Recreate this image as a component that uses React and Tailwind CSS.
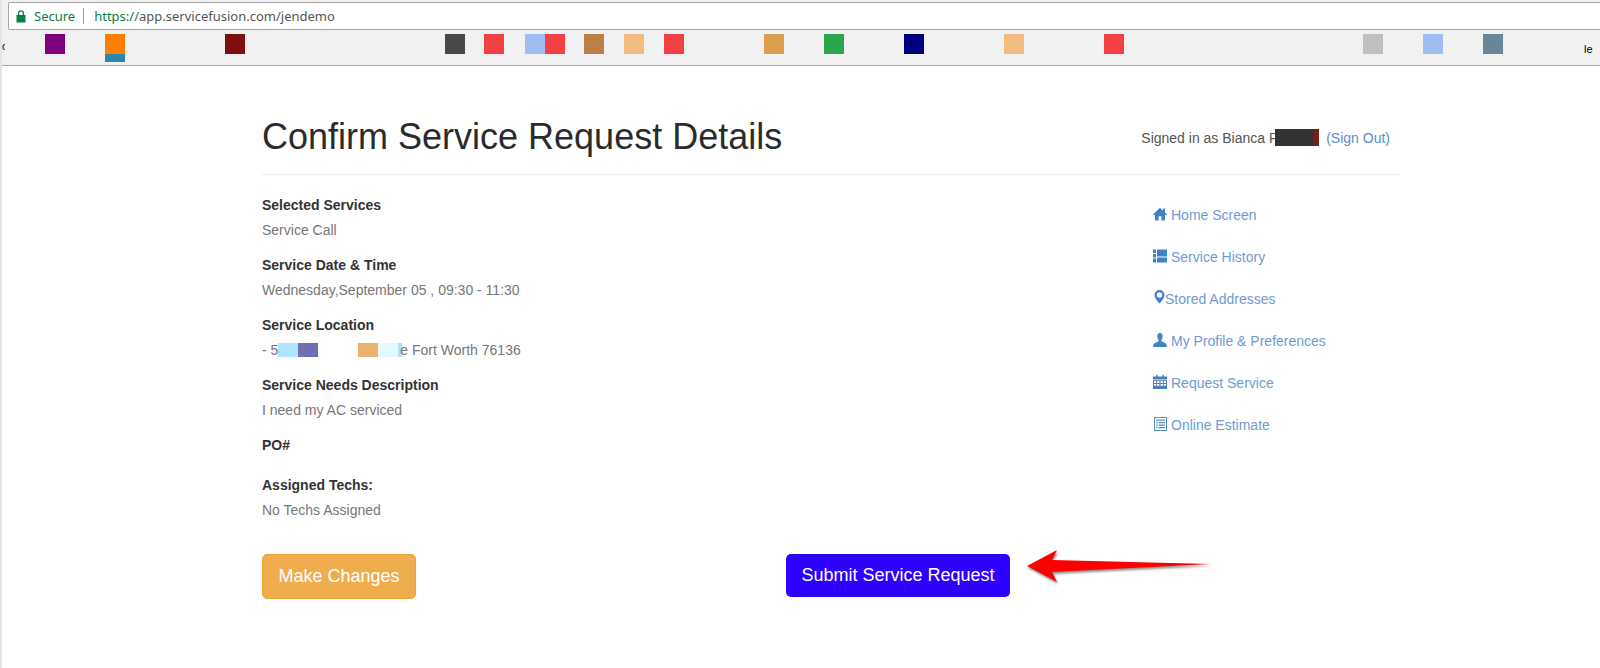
import React from "react";

const font = "font-['Liberation_Sans',Arial,sans-serif]";

function HomeIcon() {
  return (
    <svg viewBox="0 0 14 14" className="h-[14px] w-[14px] fill-[#3f82c6]">
      <path d="M7 .8 0 7.400l.9 1L2 7.400V13.500h3.600V9.200h2.800v4.300H12V7.400l1.100 1 .9-1-2-1.900V1.500h-2v2.200z" />
    </svg>
  );
}

function HistoryIcon() {
  return (
    <svg viewBox="0 0 14 14" className="h-[14px] w-[14px] fill-[#3f82c6]">
      <path d="M0 .5h3v3.600H0zM0 5.100h3v3.400H0zM0 9.500h3v4H0zM4 .5h10v7H4zM4 8.500h10v5H4z" />
    </svg>
  );
}

function PinIcon() {
  return (
    <svg viewBox="0 0 12 16" className="h-[16px] w-[12px] fill-[#3f82c6]">
      <path
        fillRule="evenodd"
        d="M6.500 0A5 5 0 0 0 1.500 5C1.500 8.500 6.500 13.500 6.500 13.500S11.500 8.500 11.500 5A5 5 0 0 0 6.500 0zm0 2.300a2.700 2.700 0 1 1 0 5.400 2.700 2.700 0 0 1 0-5.400z"
      />
    </svg>
  );
}

function UserIcon() {
  return (
    <svg viewBox="0 0 14 14" className="h-[14px] w-[14px] fill-[#3f82c6]">
      <path d="M7 0C5.200 0 4.300 1.300 4.300 3.200c0 1.500.6 3 1.400 3.800v1.300C4 9.200.6 10 .2 12.200V14h13.600v-1.800C13.400 10 10 9.200 8.300 8.300V7c.8-.8 1.400-2.300 1.400-3.800C9.700 1.300 8.800 0 7 0z" />
    </svg>
  );
}

function CalendarIcon() {
  return (
    <svg viewBox="0 0 14 14" className="h-[14px] w-[14px] fill-[#4a7fb8]">
      <path d="M3 0h1.500v1.500H9.500V0H11v1.500h3V4.500H0V1.500h3z" />
      <path
        fillRule="evenodd"
        d="M0 5.300h14V14H0zM1 6.300v1.800h2.200V6.300zm3 0v1.800h2.500V6.300zm3.500 0v1.800H10V6.300zm3.300 0v1.800H13V6.300zM1 9v1.800h2.200V9zm3 0v1.800h2.500V9zm3.500 0v1.800H10V9zm3.300 0v1.800H13V9z"
      />
    </svg>
  );
}

function EstimateIcon() {
  return (
    <svg viewBox="0 0 14 14" className="h-[14px] w-[14px] fill-[#5b8ec7]">
      <path
        fillRule="evenodd"
        d="M1 0h13v14H1zM2 1v12h11V1zM3 2.500h9v1.200H3zM3 5h1.500v1.200H3zm2.500 0H12v1.200H5.500zM3 7.500h1.500v1.200H3zm2.500 0H12v1.200H5.500zM3 10h1.500v1.200H3zm2.500 0H12v1.200H5.500z"
      />
    </svg>
  );
}

const details = [
  { label: "Selected Services", value: "Service Call" },
  { label: "Service Date & Time", value: "Wednesday,September 05 , 09:30 - 11:30" },
  { label: "Service Location", location: true },
  { label: "Service Needs Description", value: "I need my AC serviced" },
  { label: "PO#", value: "" },
  { label: "Assigned Techs:", value: "No Techs Assigned" },
];

const links = [
  { icon: <HomeIcon />, text: "Home Screen", gap: "gap-1" },
  { icon: <HistoryIcon />, text: "Service History", gap: "gap-1" },
  { icon: <PinIcon />, text: "Stored Addresses", gap: "gap-0" },
  { icon: <UserIcon />, text: "My Profile & Preferences", gap: "gap-1" },
  { icon: <CalendarIcon />, text: "Request Service", gap: "gap-1" },
  { icon: <EstimateIcon />, text: "Online Estimate", gap: "gap-1" },
];

function Swatch({ className }) {
  return <div className={`h-5 w-5 shrink-0 ${className}`} />;
}

function BrowserChrome() {
  return (
    <div>
      <div className="pt-[2px] pl-[6px] bg-[#f1f1f1]">
        <div className="flex h-[28px] items-center border border-r-0 border-[#a9a9a9] rounded-l-[2px] bg-white pl-[7px] text-[13px] leading-none font-['Noto_Sans',Arial,sans-serif]">
          <svg viewBox="0 0 10 13" className="h-[13px] w-[10px] fill-[#0b8043]">
            <path
              fillRule="evenodd"
              d="M2 5V3.200a3 3 0 0 1 6 0V5h1.500v7.500H.5V5zm1.300 0h3.400V3.200a1.700 1.700 0 0 0-3.400 0z"
            />
          </svg>
          <span className="ml-[8px] text-[#0b8043]">Secure</span>
          <div className="ml-[8px] h-[16px] w-px bg-[#9a9a9a]" />
          <span className="ml-[10px] text-[#0b8043]">
            https://<span className="text-[#555]">app.servicefusion.com/jendemo</span>
          </span>
        </div>
      </div>
      <div className="flex h-[36px] items-start border-b-[1px] border-[#aaaaaa] bg-[#f1f1f1] pt-[4px] text-[11px] font-['Liberation_Sans',Arial,sans-serif] text-black">
        <span className="mt-[7px] w-[3px] overflow-hidden leading-none">c</span>
        <Swatch className="ml-[40px] bg-[#800080]" />
        <div className="ml-[40px] h-[28px] w-5 shrink-0 bg-[#2d87ab]">
          <div className="h-5 bg-[#ff8000]" />
        </div>
        <Swatch className="ml-[100px] bg-[#801010]" />
        <Swatch className="ml-[200px] bg-[#484848]" />
        <Swatch className="ml-[19px] bg-[#f24044]" />
        <Swatch className="ml-[21px] bg-[#9fbdf0]" />
        <Swatch className="bg-[#f24044]" />
        <Swatch className="ml-[19px] bg-[#ba8048]" />
        <Swatch className="ml-[20px] bg-[#f4bd80]" />
        <Swatch className="ml-[20px] bg-[#f24044]" />
        <Swatch className="ml-[80px] bg-[#dc9f50]" />
        <Swatch className="ml-[40px] bg-[#2ca64c]" />
        <Swatch className="ml-[60px] bg-[#000080]" />
        <Swatch className="ml-[80px] bg-[#f4bd80]" />
        <Swatch className="ml-[80px] bg-[#f24044]" />
        <Swatch className="ml-[239px] bg-[#c0c0c0]" />
        <Swatch className="ml-[40px] bg-[#9fbdf0]" />
        <Swatch className="ml-[40px] bg-[#688698]" />
        <span className="ml-[81px] mt-[10px] leading-none">le</span>
      </div>
    </div>
  );
}

export default function App() {
  return (
    <div className={`min-h-[668px] bg-white border-l-2 border-[#e4e4e4] overflow-hidden ${font}`}>
      <BrowserChrome />
      <div className="ml-[260px] w-[1138px]">
        <div className="flex h-[109px] items-end justify-between border-b border-[#eeeeee] pb-[17px]">
          <h1 className="text-[36px] leading-[40px] text-[#2b2b2b]">Confirm Service Request Details</h1>
          <p className="mr-[10px] mb-[9px] text-[14px] leading-[20px] text-[#555555]">
            Signed in as Bianca P
            <span className="relative">
              <span className="inline-block w-[44px]" />
              <span className="absolute top-[-1px] left-[-3px] h-[17px] w-[44px] bg-[#333333] border-r-[5px] border-[#7a1c1c]" />
            </span>{" "}
            <span className="text-[#5b8ec7]">(Sign Out)</span>
          </p>
        </div>
        <div className="flex justify-between">
          <div className="pt-[20px]">
            {details.map((d) => (
              <div key={d.label} className={`${d.label === "PO#" ? "h-[40px]" : "h-[60px]"} text-[14px] leading-[20px]`}>
                <div className="font-bold text-[#333333]">{d.label}</div>
                {d.location ? (
                  <div className="mt-[5px] flex items-center text-[#777777]">
                    <span>- 5</span>
                    <div className="h-[14px] w-[20px] bg-[#aee4ff]" />
                    <div className="h-[14px] w-[20px] bg-[#6f6fb4]" />
                    <div className="ml-[40px] h-[14px] w-[20px] bg-[#ecb06f]" />
                    <div className="h-[14px] w-[20px] bg-[#e2faff]" />
                    <div className="h-[14px] w-[4px] bg-[#aee0ff]" />
                    <span className="ml-[-2px]">e Fort Worth 76136</span>
                  </div>
                ) : (
                  <div className="mt-[5px] text-[#777777]">{d.value}</div>
                )}
              </div>
            ))}
          </div>
          <div className="w-[247px] pt-[30px]">
            {links.map((l) => (
              <div key={l.text} className={`flex h-[42px] items-start ${l.gap} text-[14px] leading-[20px] text-[#6f9bd1]`}>
                <span className="flex h-[18px] items-center">{l.icon}</span>
                <span>{l.text}</span>
              </div>
            ))}
          </div>
        </div>
        <div className="mt-[19px] flex items-start">
          <button className="h-[45px] w-[154px] rounded-[5px] border border-[#eea236] bg-[#f0ad4e] text-[18px] text-white">
            Make Changes
          </button>
          <button className="ml-[370px] h-[43px] w-[224px] rounded-[5px] bg-[#2d00ff] text-[18px] text-white">
            Submit Service Request
          </button>
          <svg viewBox="0 0 190 40" className="ml-[15px] mt-[-7px] h-[40px] w-[190px] drop-shadow-[1px_2px_1px_rgba(0,0,0,0.45)]">
            <path d="M2 19 32 3l-5 10 159 4-159 8 5 10z" fill="#ff0000" />
          </svg>
        </div>
      </div>
    </div>
  );
}
